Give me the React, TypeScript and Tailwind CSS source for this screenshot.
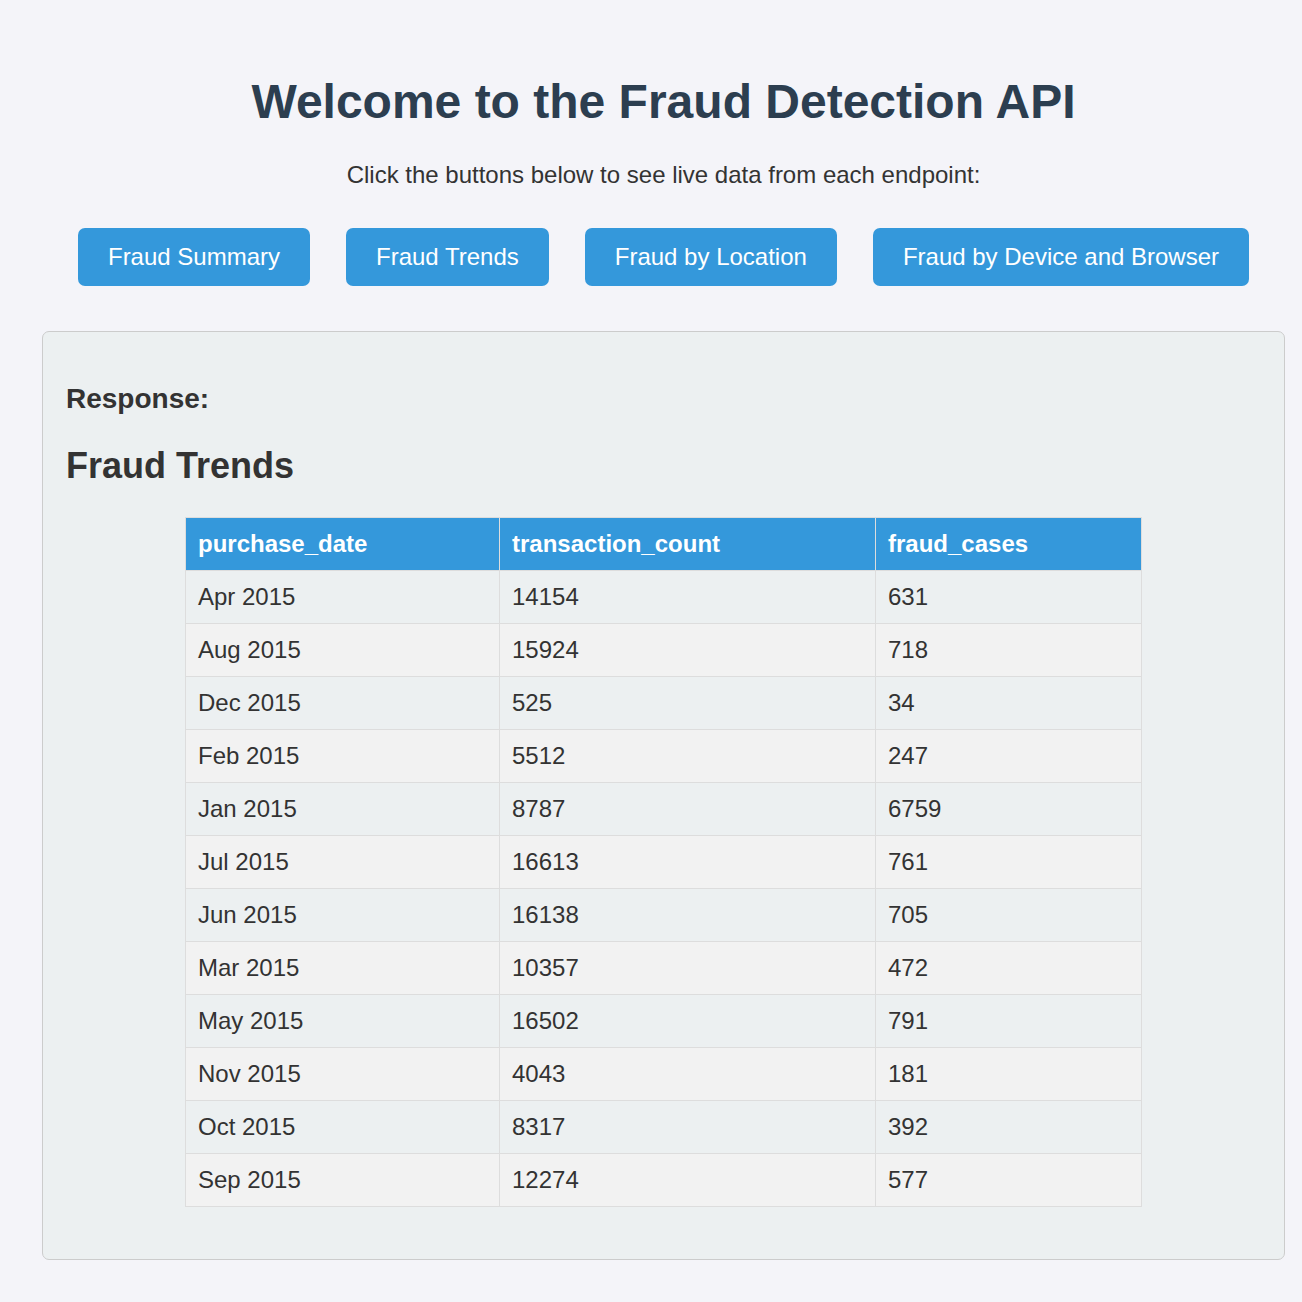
import React from 'react';

const rows = [
  ['Apr 2015', '14154', '631'],
  ['Aug 2015', '15924', '718'],
  ['Dec 2015', '525', '34'],
  ['Feb 2015', '5512', '247'],
  ['Jan 2015', '8787', '6759'],
  ['Jul 2015', '16613', '761'],
  ['Jun 2015', '16138', '705'],
  ['Mar 2015', '10357', '472'],
  ['May 2015', '16502', '791'],
  ['Nov 2015', '4043', '181'],
  ['Oct 2015', '8317', '392'],
  ['Sep 2015', '12274', '577'],
];

const buttons = ['Fraud Summary', 'Fraud Trends', 'Fraud by Location', 'Fraud by Device and Browser'];

export default function App() {
  return (
    <div className="min-h-screen bg-[#f4f4f9] pt-[74px] pb-[43px] text-[#333] font-['Liberation_Sans',Arial,sans-serif]">
      <div className="ml-[42px] w-[1243px]">
        <h1 className="text-center text-[48px] leading-[55px] font-bold text-[#2c3e50]">
          Welcome to the Fraud Detection API
        </h1>
        <p className="mt-[32px] text-center text-[24px] leading-[28px]">
          Click the buttons below to see live data from each endpoint:
        </p>

        <div className="mt-[39px] flex justify-center gap-[36px]">
          {buttons.map((b) => (
            <button
              key={b}
              className="h-[58px] px-[30px] rounded-[7px] bg-[#3498db] text-white text-[24px] leading-[28px]"
            >
              {b}
            </button>
          ))}
        </div>

        <div className="mt-[45px] border border-[#ccc] rounded-[7px] bg-[#ecf0f1] px-[23px] pt-[51px] pb-[52px]">
          <h3 className="text-[28px] leading-[32px] font-bold">Response:</h3>
          <h2 className="mt-[30px] text-[36px] leading-[41px] font-bold">Fraud Trends</h2>

          <table className="mt-[31px] mx-auto w-[957px] border-collapse text-[24px] leading-[28px]">
            <thead>
              <tr className="bg-[#3498db] text-white">
                <th className="w-[314px] h-[53px] border border-[#ddd] pl-[12px] text-left font-bold">purchase_date</th>
                <th className="w-[376px] h-[53px] border border-[#ddd] pl-[12px] text-left font-bold">transaction_count</th>
                <th className="h-[53px] border border-[#ddd] pl-[12px] text-left font-bold">fraud_cases</th>
              </tr>
            </thead>
            <tbody>
              {rows.map((r, i) => (
                <tr key={r[0]} className={i % 2 === 0 ? 'bg-[#ecf0f1]' : 'bg-[#f2f2f2]'}>
                  {r.map((c, j) => (
                    <td key={j} className="h-[53px] border border-[#ddd] pl-[12px]">
                      {c}
                    </td>
                  ))}
                </tr>
              ))}
            </tbody>
          </table>
        </div>
      </div>
    </div>
  );
}
